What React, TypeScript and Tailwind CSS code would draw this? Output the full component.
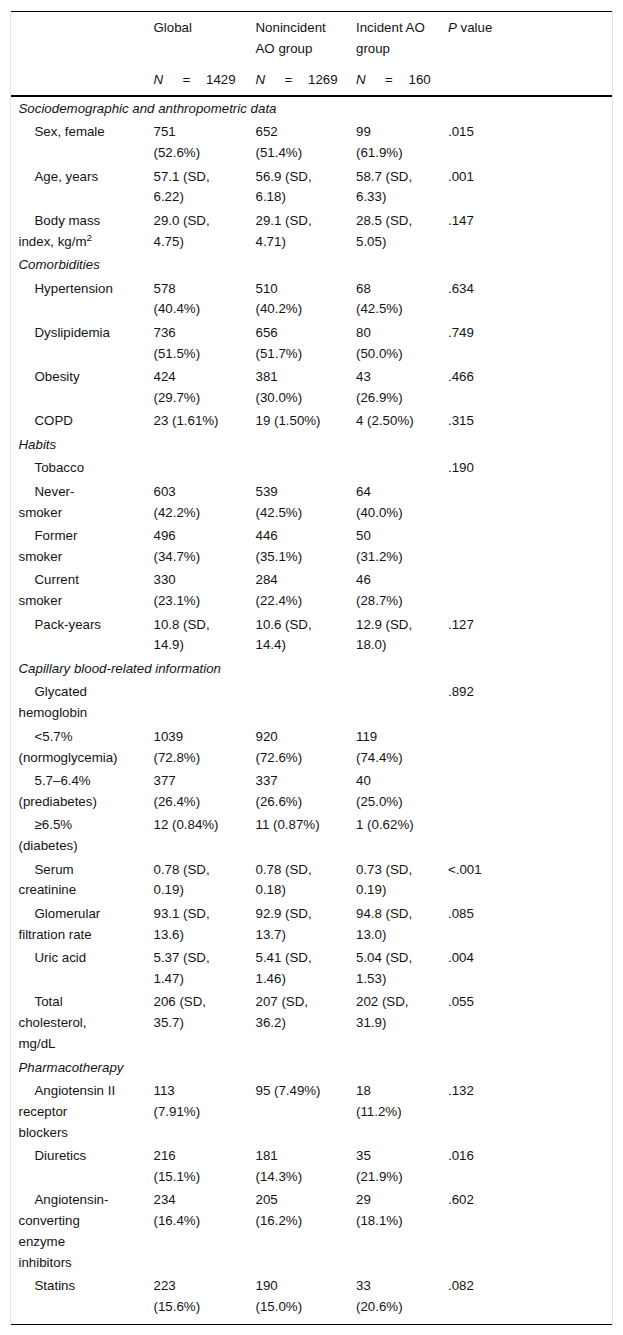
import React from "react";

type Item = {
  kind: "item";
  label: React.ReactNode[];
  cells: string[][];
  p: string;
};
type Section = { kind: "section"; label: string };
type Row = Item | Section;

const sd = (a: string, b: string) => [`${a} (SD,`, `${b})`];
const pc = (a: string, b: string) => [a, `(${b})`];
const one = (a: string) => [a];

const rows: Row[] = [
  { kind: "section", label: "Sociodemographic and anthropometric data" },
  { kind: "item", label: ["Sex, female"], cells: [pc("751", "52.6%"), pc("652", "51.4%"), pc("99", "61.9%")], p: ".015" },
  { kind: "item", label: ["Age, years"], cells: [sd("57.1", "6.22"), sd("56.9", "6.18"), sd("58.7", "6.33")], p: ".001" },
  {
    kind: "item",
    label: ["Body mass", <>index, kg/m<sup>2</sup></>],
    cells: [sd("29.0", "4.75"), sd("29.1", "4.71"), sd("28.5", "5.05")],
    p: ".147",
  },
  { kind: "section", label: "Comorbidities" },
  { kind: "item", label: ["Hypertension"], cells: [pc("578", "40.4%"), pc("510", "40.2%"), pc("68", "42.5%")], p: ".634" },
  { kind: "item", label: ["Dyslipidemia"], cells: [pc("736", "51.5%"), pc("656", "51.7%"), pc("80", "50.0%")], p: ".749" },
  { kind: "item", label: ["Obesity"], cells: [pc("424", "29.7%"), pc("381", "30.0%"), pc("43", "26.9%")], p: ".466" },
  { kind: "item", label: ["COPD"], cells: [one("23 (1.61%)"), one("19 (1.50%)"), one("4 (2.50%)")], p: ".315" },
  { kind: "section", label: "Habits" },
  { kind: "item", label: ["Tobacco"], cells: [[], [], []], p: ".190" },
  { kind: "item", label: ["Never-", "smoker"], cells: [pc("603", "42.2%"), pc("539", "42.5%"), pc("64", "40.0%")], p: "" },
  { kind: "item", label: ["Former", "smoker"], cells: [pc("496", "34.7%"), pc("446", "35.1%"), pc("50", "31.2%")], p: "" },
  { kind: "item", label: ["Current", "smoker"], cells: [pc("330", "23.1%"), pc("284", "22.4%"), pc("46", "28.7%")], p: "" },
  { kind: "item", label: ["Pack-years"], cells: [sd("10.8", "14.9"), sd("10.6", "14.4"), sd("12.9", "18.0")], p: ".127" },
  { kind: "section", label: "Capillary blood-related information" },
  { kind: "item", label: ["Glycated", "hemoglobin"], cells: [[], [], []], p: ".892" },
  { kind: "item", label: ["<5.7%", "(normoglycemia)"], cells: [pc("1039", "72.8%"), pc("920", "72.6%"), pc("119", "74.4%")], p: "" },
  { kind: "item", label: ["5.7–6.4%", "(prediabetes)"], cells: [pc("377", "26.4%"), pc("337", "26.6%"), pc("40", "25.0%")], p: "" },
  { kind: "item", label: ["≥6.5%", "(diabetes)"], cells: [one("12 (0.84%)"), one("11 (0.87%)"), one("1 (0.62%)")], p: "" },
  { kind: "item", label: ["Serum", "creatinine"], cells: [sd("0.78", "0.19"), sd("0.78", "0.18"), sd("0.73", "0.19")], p: "<.001" },
  { kind: "item", label: ["Glomerular", "filtration rate"], cells: [sd("93.1", "13.6"), sd("92.9", "13.7"), sd("94.8", "13.0")], p: ".085" },
  { kind: "item", label: ["Uric acid"], cells: [sd("5.37", "1.47"), sd("5.41", "1.46"), sd("5.04", "1.53")], p: ".004" },
  { kind: "item", label: ["Total", "cholesterol,", "mg/dL"], cells: [sd("206", "35.7"), sd("207", "36.2"), sd("202", "31.9")], p: ".055" },
  { kind: "section", label: "Pharmacotherapy" },
  { kind: "item", label: ["Angiotensin II", "receptor", "blockers"], cells: [pc("113", "7.91%"), one("95 (7.49%)"), pc("18", "11.2%")], p: ".132" },
  { kind: "item", label: ["Diuretics"], cells: [pc("216", "15.1%"), pc("181", "14.3%"), pc("35", "21.9%")], p: ".016" },
  {
    kind: "item",
    label: ["Angiotensin-", "converting", "enzyme", "inhibitors"],
    cells: [pc("234", "16.4%"), pc("205", "16.2%"), pc("29", "18.1%")],
    p: ".602",
  },
  { kind: "item", label: ["Statins"], cells: [pc("223", "15.6%"), pc("190", "15.0%"), pc("33", "20.6%")], p: ".082" },
];

function Lines({ lines }: { lines: React.ReactNode[] }) {
  return (
    <>
      {lines.map((l, i) => (
        <React.Fragment key={i}>
          {i > 0 && <br />}
          {l}
        </React.Fragment>
      ))}
    </>
  );
}

function NCount({ n }: { n: string }) {
  return (
    <span className="flex whitespace-nowrap">
      <span className="w-[29px] italic">N</span>
      <span className="w-[23.5px]">=</span>
      <span>{n}</span>
    </span>
  );
}

export default function App() {
  const last = rows.length - 1;
  return (
    <div className="min-h-[1335px] bg-white pt-[11px] font-['Liberation_Sans',Arial,sans-serif] text-[13.3px] leading-[20.8px] text-[#141414]">
      <div className="ml-[10px] w-[603px] border-x border-[#e2e2e2]">
        <table className="w-full table-fixed border-separate border-spacing-0 border-t border-black text-left">
          <colgroup>
            <col className="w-[142.5px]" />
            <col className="w-[102px]" />
            <col className="w-[100.5px]" />
            <col className="w-[92px]" />
            <col />
          </colgroup>
          <thead>
            <tr className="align-top">
              <th className="pt-[6px] pb-[5px] font-normal" />
              <th className="pt-[6px] pb-[5px] font-normal">Global</th>
              <th className="pt-[6px] pb-[5px] font-normal">
                Nonincident
                <br />
                AO group
              </th>
              <th className="pt-[6px] pb-[5px] font-normal">
                Incident AO
                <br />
                group
              </th>
              <th className="pt-[6px] pb-[5px] font-normal">
                <i>P</i> value
              </th>
            </tr>
            <tr className="align-top">
              <th className="border-b-2 border-black pt-[5px] pb-[5px] font-normal" />
              <th className="border-b-2 border-black pt-[5px] pb-[5px] font-normal">
                <NCount n="1429" />
              </th>
              <th className="border-b-2 border-black pt-[5px] pb-[5px] font-normal">
                <NCount n="1269" />
              </th>
              <th className="border-b-2 border-black pt-[5px] pb-[5px] font-normal">
                <NCount n="160" />
              </th>
              <th className="border-b-2 border-black pt-[5px] pb-[5px] font-normal" />
            </tr>
          </thead>
          <tbody>
            {rows.map((r, i) => {
              const isLast = i === last;
              const pad = isLast ? "pt-[1.35px] pb-[6px] border-b border-black" : "py-[1.35px]";
              if (r.kind === "section") {
                return (
                  <tr key={i}>
                    <td colSpan={5} className={`${pad} pl-[7.5px] italic whitespace-nowrap`}>
                      {r.label}
                    </td>
                  </tr>
                );
              }
              return (
                <tr key={i} className="align-top">
                  <td className={`${pad} pl-[7.5px] indent-4 whitespace-nowrap`}>
                    <Lines lines={r.label} />
                  </td>
                  {r.cells.map((c, j) => (
                    <td key={j} className={`${pad} whitespace-nowrap`}>
                      <Lines lines={c} />
                    </td>
                  ))}
                  <td className={`${pad} whitespace-nowrap`}>{r.p}</td>
                </tr>
              );
            })}
          </tbody>
        </table>
      </div>
    </div>
  );
}
